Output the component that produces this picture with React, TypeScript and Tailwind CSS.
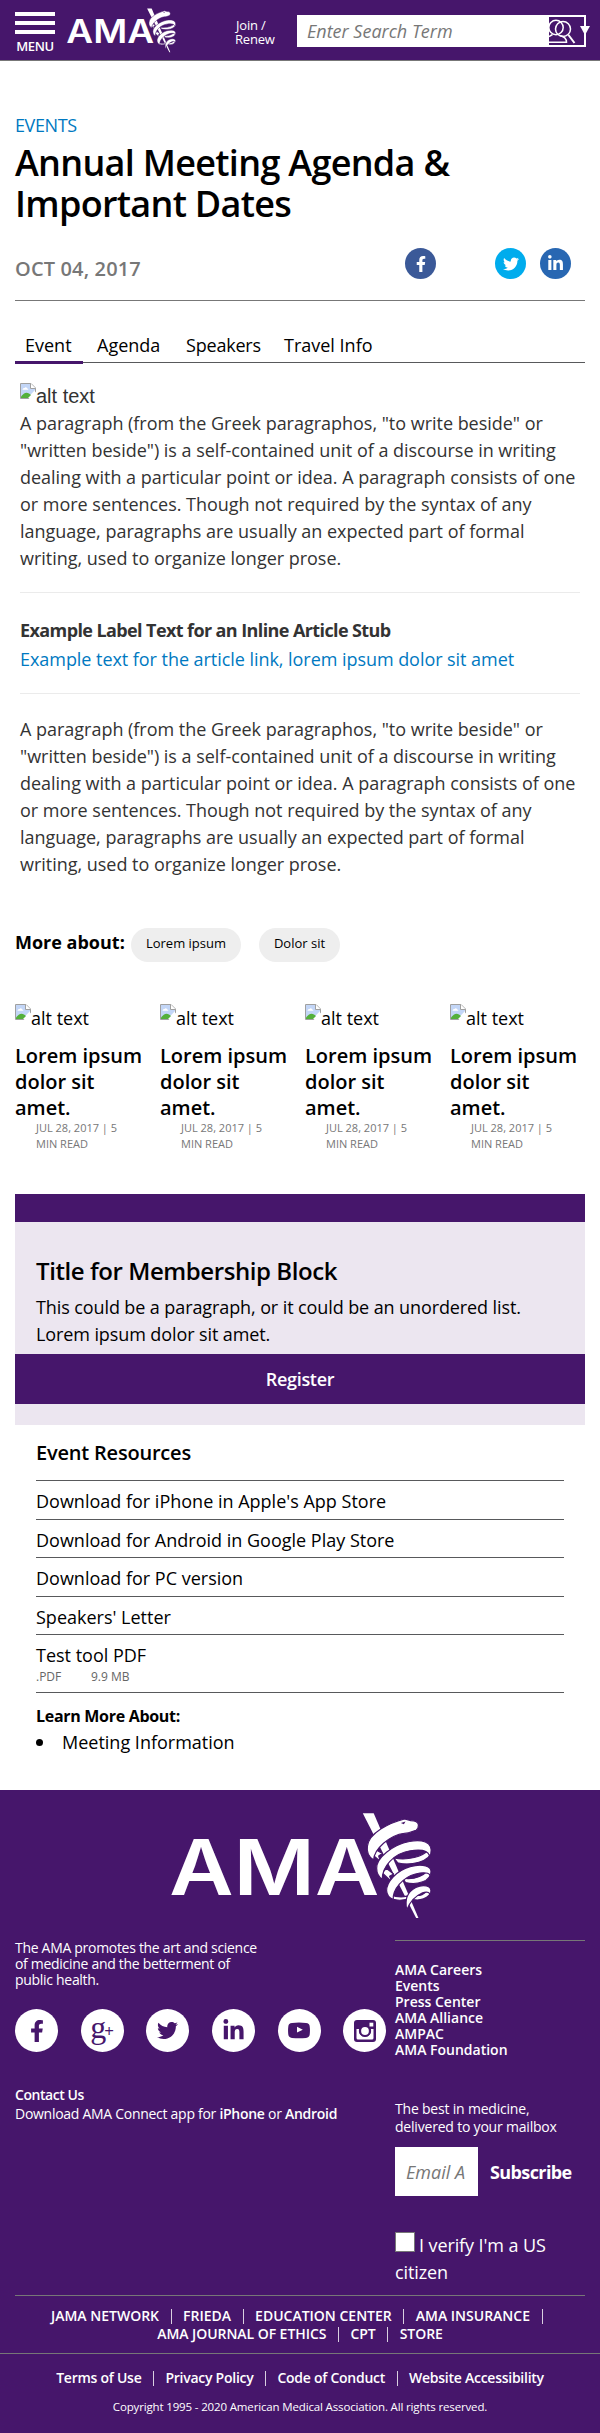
import type { ReactNode } from "react";
import { FaFacebookF, FaLinkedinIn, FaTwitter } from "react-icons/fa";

function AmaLogo({ className }: { className: string }) {
  return (
    <svg viewBox="30 38 788 320" className={className} fill="#fff" role="img" overflow="visible">
      <text
        x="25"
        y="286"
        fontFamily="Inter, sans-serif"
        fontWeight="600"
        fontSize="232"
        textLength="634"
        lengthAdjust="spacingAndGlyphs"
      >
        AMA
      </text>
      <path d="M609 39H642L777 355H770Z" />
      <g stroke="#46166b" strokeWidth="3.5" strokeLinejoin="round">
        <path d="M640 165L662 184 657 168 668 160 650 150Z" />
        <path d="M668 219L697 246 690 229 702 222 680 205Z" />
        <path d="M690 284C705 290 725 294 742 289L745 298C725 304 700 302 690 294Z" />
        <path d="M815 152C816 186 750 198 714 188L703 174C745 182 790 170 806 150Z" />
        <path d="M815 212C816 246 772 256 738 248L730 235C765 240 790 228 806 212Z" />
        <path d="M815 270C814 298 775 306 756 297L758 286C785 290 795 284 806 268Z" />
        <path d="M777 74C776 63 765 61 754 61L735 56C688 68 628 98 623 138C620 158 629 172 642 180C642 148 690 104 735 99C752 99 756 94 770 90C776 86 777 80 777 74Z" />
        <path d="M814 163C824 122 782 117 750 124C698 134 650 174 651 205C651 222 658 232 668 238C667 200 702 160 752 152C784 147 805 150 810 166Z" />
        <path d="M814 222C822 196 786 190 752 200C710 212 680 247 681 273C682 288 690 295 701 299C699 268 730 232 768 222C790 217 806 217 811 225Z" />
        <path d="M814 278C820 256 790 253 769 263C744 276 735 300 742 330C752 304 768 288 787 280C800 275 808 276 811 282Z" />
      </g>
      <path d="M724 68L738 64 733 72Z" fill="#46166b" />
    </svg>
  );
}

function BrokenImage() {
  return (
    <svg viewBox="0 0 16 16" className="size-4 shrink-0">
      <path d="M.5.5H11L15.5 5V15.5H.5Z" fill="#fff" stroke="#a0a0a0" />
      <path d="M1 1H10.5L11 5H15V7L7.5 15H1Z" fill="#c3d6f7" />
      <path d="M2.5 6.500Q3 4.500 4.500 5Q6 3.500 7.200 5.500Q8.500 5.500 8.300 6.700H2.500Z" fill="#fff" />
      <path d="M1 15V13.500Q5 8 9 10.500L11 12 8 15Z" fill="#54b03b" />
      <path d="M10.500.5V5.500H15.500" fill="#fff" stroke="#a0a0a0" />
      <path d="M8.500 16L16 8.500V16Z" fill="#fff" />
    </svg>
  );
}

function YoutubeIcon() {
  return (
    <svg viewBox="0 0 22 16" className="h-[17px] w-[22px]">
      <path
        fill="#46166b"
        fillRule="evenodd"
        d="M4 .6Q11-.4 18 .6Q21.500 1 21.700 4Q22.200 8 21.700 12Q21.500 15 18 15.400Q11 16.300 4 15.400Q.5 15 .3 12Q-.2 8 .3 4Q.5 1 4 .6ZM9 4.300V10L14.800 7.200Z"
      />
    </svg>
  );
}

function InstagramIcon() {
  return (
    <svg viewBox="0 0 22 22" className="size-[22px]">
      <rect width="22" height="22" rx="3" fill="#46166b" />
      <path d="M2.500 9H5.200A6.100 6.100 0 1 0 16.800 9H19.500V18Q19.500 19.500 18 19.500H4Q2.500 19.500 2.500 18Z" fill="#fff" />
      <circle cx="11" cy="11" r="5.800" fill="#46166b" />
      <circle cx="11" cy="11" r="3.900" fill="#fff" />
      <rect x="15.500" y="2.700" width="3.800" height="3.800" fill="#fff" />
    </svg>
  );
}

function SearchIcon() {
  return (
    <svg viewBox="0 0 35 28" className="h-7 w-[35px]" fill="none" stroke="#fff" strokeWidth="1.500">
      <circle cx="7" cy="10.500" r="7.200" />
      <circle cx="14" cy="12" r="7.500" />
      <path d="M19.500 18L25.500 26" strokeWidth="2" />
      <path d="M0 19.500L3.500 17.500M11 18.500Q17.500 20 17.500 25.300H0" />
    </svg>
  );
}

function Disc({ className, children }: { className: string; children: ReactNode }) {
  return <a className={`flex shrink-0 items-center justify-center rounded-full ${className}`}>{children}</a>;
}

const BODY =
  "A paragraph (from the Greek paragraphos, \"to write beside\" or|\"written beside\") is a self-contained unit of a discourse in writing|dealing with a particular point or idea. A paragraph consists of one|or more sentences. Though not required by the syntax of any|language, paragraphs are usually an expected part of formal|writing, used to organize longer prose.";

function Paragraph({ className }: { className: string }) {
  return (
    <p className={`text-[18px]/[27px] tracking-[-0.020px] whitespace-nowrap text-[#333] ${className}`}>
      {BODY.split("|").map((line) => (
        <span key={line} className="block">
          {line}
        </span>
      ))}
    </p>
  );
}

const RESOURCES = [
  "Download for iPhone in Apple's App Store",
  "Download for Android in Google Play Store",
  "Download for PC version",
  "Speakers' Letter",
];

const CAREERS = ["AMA Careers", "Events", "Press Center", "AMA Alliance", "AMPAC", "AMA Foundation"];

function Bar() {
  return <span className="mx-[11.500px] h-[15px] w-px bg-[#d9cfe0]" />;
}

export default function App() {
  return (
    <div className="w-[600px] overflow-hidden bg-white font-['Open_Sans','Noto_Sans',sans-serif] text-[18px]/[27px] text-black">
      <header className="flex h-[61px] border-b border-[#777] bg-[#46166b] pl-[15px] text-white">
        <div className="flex w-10 flex-col items-center pt-3">
          <span className="h-1 w-full bg-white" />
          <span className="mt-[5px] h-1 w-full bg-white" />
          <span className="mt-[5px] h-1 w-full bg-white" />
          <span className="mt-[3px] text-[13px]/[18px] font-semibold tracking-[-0.4px]">MENU</span>
        </div>
        <AmaLogo className="mt-2 ml-3 h-[45px] w-[109px]" />
        <a className="mt-[18px] ml-[59px] w-[62px] text-[13px]/[14px] tracking-[-0.200px]">
          <span className="block pl-px">Join /</span>
          <span className="block">Renew</span>
        </a>
        <div className="relative mt-[15px] flex h-8 w-[289px] border-2 border-white">
          <div className="h-7 w-[250px] bg-white pl-2 text-[18px]/[28px] text-[#777] italic">Enter Search Term</div>
          <SearchIcon />
          <svg viewBox="0 0 10 9" className="absolute top-[9px] -right-[6px] h-[9px] w-[10px]">
            <path d="M0 0H10L5 9Z" fill="#fff" />
          </svg>
        </div>
      </header>

      <main className="px-[15px]">
        <p className="mt-[51px] tracking-[-0.4px] text-[#0079c1]">EVENTS</p>
        <h1 className="mt-[3px] text-[36px]/[41px] font-semibold tracking-[-0.7px]">
          Annual Meeting Agenda &amp;
          <br />
          Important Dates
        </h1>
        <div className="mt-6 flex h-[31px]">
          <p className="w-[390px] pt-[5px] text-[20px]/[31px] font-semibold tracking-[0.15px] text-[#777]">OCT 04, 2017</p>
          <Disc className="size-[31px] bg-[#3b5998] text-white">
            <FaFacebookF className="size-4" />
          </Disc>
          <Disc className="ml-[59px] size-[31px] bg-[#00aced] text-white">
            <FaTwitter className="size-4" />
          </Disc>
          <Disc className="ml-[14px] size-[31px] bg-[#2867b2] text-white">
            <FaLinkedinIn className="size-[17px]" />
          </Disc>
        </div>
        <hr className="mt-[21px] border-[#777]" />

        <nav className="mt-[31px] flex h-[31px] border-b border-[#58595b] whitespace-nowrap">
          <a className="h-8 w-[68px] border-b-3 border-[#46166b] pl-[10px]">Event</a>
          <a className="w-[89px] pl-[14px]">Agenda</a>
          <a className="w-[98px] pl-[14px] tracking-[-0.200px]">Speakers</a>
          <a className="pl-[14px]">Travel Info</a>
        </nav>

        <article className="px-[5px]">
          <div className="mt-5 flex h-[27px] font-['Liberation_Sans',Arial,sans-serif] text-[20px] text-[#333]">
            <BrokenImage />
            <span>alt text</span>
          </div>
          <Paragraph className="" />
          <section className="mt-5 border-y border-[#ebebeb] pt-6 pb-5">
            <h4 className="font-bold tracking-[-0.600px] text-[#333]">Example Label Text for an Inline Article Stub</h4>
            <a className="mt-[2px] block tracking-[-0.050px] text-[#0079c1]">
              Example text for the article link, lorem ipsum dolor sit amet
            </a>
          </section>
          <Paragraph className="mt-[22px]" />
        </article>

        <div className="mt-[50px] flex h-[34px] text-[13px]">
          <strong className="w-[116px] text-[18px]/[28px] whitespace-nowrap">
            More about:
          </strong>
          <a className="w-[110px] rounded-full bg-[#eee] text-center leading-[31px]">Lorem ipsum</a>
          <a className="ml-[18px] w-[81px] rounded-full bg-[#eee] text-center leading-[31px]">Dolor sit</a>
        </div>

        <section className="mt-[42px] grid grid-cols-[repeat(4,145px)]">
          {[0, 1, 2, 3].map((n) => (
            <article key={n}>
              <div className="flex h-[39px]">
                <BrokenImage />
                <span className="pt-px">alt text</span>
              </div>
              <h3 className="text-[20px]/[26px] font-semibold">
                Lorem ipsum
                <br />
                dolor sit
                <br />
                amet.
              </h3>
              <p className="-mt-px pl-[21px] text-[11px]/[16px] text-[#777]">
                JUL 28, 2017 | 5
                <br />
                MIN READ
              </p>
            </article>
          ))}
        </section>

        <section className="mt-[42px] border-t-[28px] border-[#46166b] bg-[#ece6f0] pt-[33px] pb-[21px]">
          <h2 className="px-[21px] text-[24px]/[32px] font-semibold tracking-[-0.420px]">Title for Membership Block</h2>
          <p className="mt-[7px] px-[21px] tracking-[-0.100px]">
            This could be a paragraph, or it could be an unordered list.
            <br />
            Lorem ipsum dolor sit amet.
          </p>
          <a className="mt-[6px] block h-[50px] bg-[#46166b] text-center text-[18px]/[50px] font-semibold tracking-[-0.300px] text-white">
            Register
          </a>
        </section>

        <section className="px-[21px]">
          <h3 className="mt-[15px] text-[20px]/[26px] font-semibold tracking-[-0.200px]">Event Resources</h3>
          <ul className="mt-[14px] border-t border-[#58595b]">
            {RESOURCES.map((name) => (
              <li key={name} className="border-b border-[#58595b] pt-[7px] pb-[3.5px]">
                {name}
              </li>
            ))}
            <li className="border-b border-[#58595b] pt-[7px] pb-[7px]">
              Test tool PDF
              <div className="flex text-[12px]/[16px] text-[#666]">
                <span className="w-[55px]">.PDF</span>
                <span>9.9 MB</span>
              </div>
            </li>
          </ul>
          <h4 className="mt-[11px] text-[16px]/[24px] font-bold tracking-[-0.300px]">Learn More About:</h4>
          <ul className="mt-px">
            <li className="flex items-center">
              <span className="mr-[19px] size-[7px] rounded-full bg-black" />
              Meeting Information
            </li>
          </ul>
        </section>
      </main>

      <footer className="mt-[34px] h-[643px] bg-[#46166b] pt-[23px] text-[14px]/[16px] text-white">
        <AmaLogo className="mx-auto h-[106px] w-[263px] translate-x-px" />
        <div className="mt-[21px] flex h-[355px] pl-[15px]">
          <div className="w-[380px] whitespace-nowrap">
            <p className="tracking-[-0.300px]">
              The AMA promotes the art and science
              <br />
              of medicine and the betterment of
              <br />
              public health.
            </p>
            <div className="mt-[21px] flex gap-[22.700px] text-[#46166b]">
              <Disc className="size-[43px] bg-white">
                <FaFacebookF className="size-[22px]" />
              </Disc>
              <Disc className="size-[43px] bg-white">
                <span className="flex items-center font-['Liberation_Serif',serif] text-[32px]/[30px]">
                  <span className="-mt-2">g</span>
                  <span className="-ml-[2px] font-['Open_Sans',sans-serif] text-[17px]">+</span>
                </span>
              </Disc>
              <Disc className="size-[43px] bg-white">
                <FaTwitter className="size-[21px]" />
              </Disc>
              <Disc className="size-[43px] bg-white">
                <FaLinkedinIn className="size-[23px]" />
              </Disc>
              <Disc className="size-[43px] bg-white">
                <YoutubeIcon />
              </Disc>
              <Disc className="size-[43px] bg-white">
                <InstagramIcon />
              </Disc>
            </div>
            <h5 className="mt-[33px] text-[14px]/[19px] font-semibold tracking-[-0.450px]">Contact Us</h5>
            <p className="text-[14px]/[19px] tracking-[-0.280px]">
              Download AMA Connect app for <b className="font-semibold">iPhone</b> or <b className="font-semibold">Android</b>
            </p>
          </div>
          <div className="w-[190px] whitespace-nowrap">
            <ul className="border-t border-[#777] pt-[21px] font-semibold">
              {CAREERS.map((name) => (
                <li key={name}>{name}</li>
              ))}
            </ul>
            <p className="mt-[42px] text-[14px]/[18px] tracking-[-0.200px]">
              The best in medicine,
              <br />
              delivered to your mailbox
            </p>
            <div className="mt-[11px] flex text-[18px]/[50px]">
              <div className="h-[49px] w-[83px] overflow-hidden bg-white pl-[11px] text-[#777] italic">Email A</div>
              <button className="h-[49px] pl-3 font-bold tracking-[-0.600px]">Subscribe</button>
            </div>
            <label className="mt-[36px] block text-[18px]/[27px] tracking-[-0.100px]">
              <span className="flex">
                <span className="mr-1 size-5 border border-[#777] bg-white" />
                I verify I'm a US
              </span>
              <span className="block">citizen</span>
            </label>
          </div>
        </div>
        <div className="mx-[15px] border-t border-[#777] pt-[11px] text-[14px]/[18px] font-semibold whitespace-nowrap">
          <div className="flex items-center justify-center pl-[5px]">
            JAMA NETWORK
            <Bar />
            FRIEDA
            <Bar />
            EDUCATION CENTER
            <Bar />
            AMA INSURANCE
            <Bar />
          </div>
          <div className="flex items-center justify-center tracking-[-0.050px]">
            AMA JOURNAL OF ETHICS
            <Bar />
            CPT
            <Bar />
            STORE
          </div>
        </div>
        <div className="mt-[10px] border-t border-[#777] pt-[15px] text-center">
          <div className="flex items-center justify-center text-[14px]/[18px] font-semibold tracking-[-0.260px] whitespace-nowrap">
            Terms of Use
            <Bar />
            Privacy Policy
            <Bar />
            Code of Conduct
            <Bar />
            Website Accessibility
          </div>
          <p className="mt-[11px] text-[11.500px]/[18px] tracking-[-0.150px]">
            Copyright 1995 - 2020 American Medical Association. All rights reserved.
          </p>
        </div>
      </footer>
    </div>
  );
}
